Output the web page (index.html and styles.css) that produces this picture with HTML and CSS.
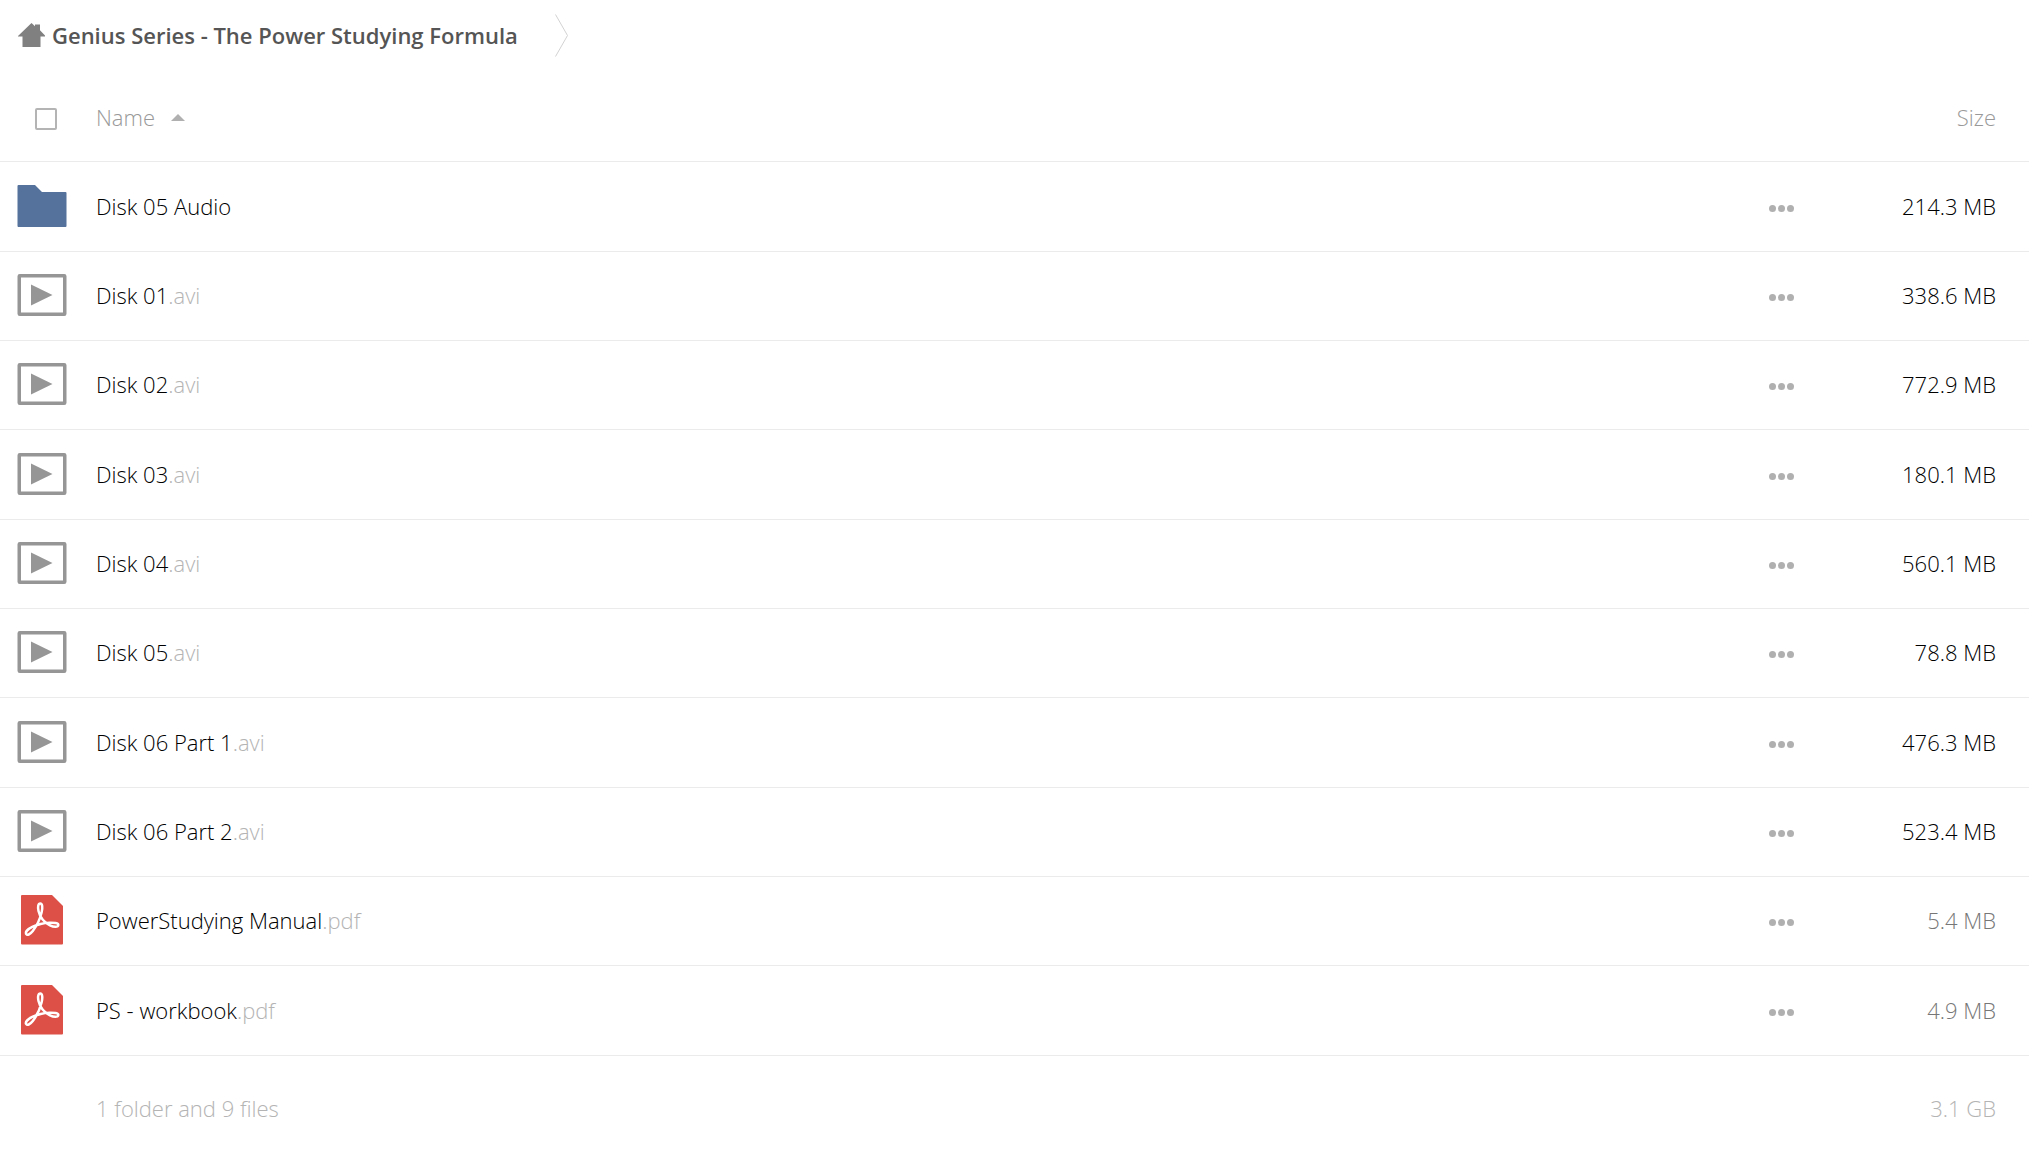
FILE: index.html
```html
<!DOCTYPE html>
<html lang="en">
<head>
    <meta charset="UTF-8">
    <meta name="viewport" content="width=device-width, initial-scale=1.0">
    <title>Genius Series - The Power Studying Formula</title>
    <link rel="stylesheet" href="styles.css">
</head>
<body>
    <!-- Icons shared by the rows -->
    <svg class="sprite" aria-hidden="true">
        <symbol id="icon-folder" viewBox="0 0 50 50">
            <path fill="#54729b" d="M1.500 4H18l7 7h23.500a1 1 0 0 1 1 1V45a1 1 0 0 1-1 1h-47a1 1 0 0 1-1-1V5a1 1 0 0 1 1-1z"/>
        </symbol>
        <symbol id="icon-video" viewBox="0 0 50 50">
            <rect x="2.250" y="5.750" width="45.500" height="38.500" rx="0.500" fill="none" stroke="#969696" stroke-width="3.500"/>
            <path fill="#969696" d="M14 14.500v21l21.500-10.500z"/>
        </symbol>
        <symbol id="icon-pdf" viewBox="0 0 50 50">
            <path fill="#dc5047" d="M5 0h30l11 11v37.500a1 1 0 0 1-1 1H5a1 1 0 0 1-1-1V1a1 1 0 0 1 1-1z"/>
            <path fill="none" stroke="#fff" stroke-width="2.500" stroke-linejoin="round" d="M23.300 8.500c-2.200 0-2.700 3.500-1.800 7.500 1.400 6 6 11.500 11.500 14.300 4 2 8 2 8.300-.2.300-2-4.300-2.600-9-2.400-6 .2-12 1.800-17 4.200-4.200 2-7 5-6.300 7 .8 2 4.300.5 6.800-2.800 4-5.400 7.300-12.300 8.800-18.600 1.200-5 .8-9-1.300-9z"/>
        </symbol>
    </svg>

    <nav class="breadcrumb">
        <a class="crumb" href="#">
            <svg class="home" viewBox="0 0 27 24" aria-hidden="true">
                <path fill="#808080" d="M13.500 0l3.500 3.200V1.500h5v5.800L27.500 13v.5H22.500V24h-18V13.500H0V13z"/>
            </svg>
            <span>Genius Series - The Power Studying Formula</span>
        </a>
        <svg class="chevron" viewBox="0 0 13 43" aria-hidden="true">
            <path fill="none" stroke="#d2d2d2" d="M.5.5l12 21-12 21"/>
        </svg>
    </nav>

    <table class="files">
        <thead>
            <tr>
                <th class="col-icon"><input type="checkbox" class="select-all" aria-label="Select all"></th>
                <th class="col-name"><button class="sort">Name <span class="arrow"></span></button></th>
                <th class="col-menu"></th>
                <th class="col-size"><button class="sort">Size</button></th>
            </tr>
        </thead>
        <tbody>
            <tr>
                <td class="col-icon"><svg class="icon"><use href="#icon-folder"/></svg></td>
                <td class="col-name"><a href="#">Disk 05 Audio</a></td>
                <td class="col-menu"><button class="more" aria-label="Actions"><i></i><i></i><i></i></button></td>
                <td class="col-size">214.3 MB</td>
            </tr>
            <tr>
                <td class="col-icon"><svg class="icon"><use href="#icon-video"/></svg></td>
                <td class="col-name"><a href="#">Disk 01<span class="ext">.avi</span></a></td>
                <td class="col-menu"><button class="more" aria-label="Actions"><i></i><i></i><i></i></button></td>
                <td class="col-size">338.6 MB</td>
            </tr>
            <tr>
                <td class="col-icon"><svg class="icon"><use href="#icon-video"/></svg></td>
                <td class="col-name"><a href="#">Disk 02<span class="ext">.avi</span></a></td>
                <td class="col-menu"><button class="more" aria-label="Actions"><i></i><i></i><i></i></button></td>
                <td class="col-size">772.9 MB</td>
            </tr>
            <tr>
                <td class="col-icon"><svg class="icon"><use href="#icon-video"/></svg></td>
                <td class="col-name"><a href="#">Disk 03<span class="ext">.avi</span></a></td>
                <td class="col-menu"><button class="more" aria-label="Actions"><i></i><i></i><i></i></button></td>
                <td class="col-size">180.1 MB</td>
            </tr>
            <tr>
                <td class="col-icon"><svg class="icon"><use href="#icon-video"/></svg></td>
                <td class="col-name"><a href="#">Disk 04<span class="ext">.avi</span></a></td>
                <td class="col-menu"><button class="more" aria-label="Actions"><i></i><i></i><i></i></button></td>
                <td class="col-size">560.1 MB</td>
            </tr>
            <tr>
                <td class="col-icon"><svg class="icon"><use href="#icon-video"/></svg></td>
                <td class="col-name"><a href="#">Disk 05<span class="ext">.avi</span></a></td>
                <td class="col-menu"><button class="more" aria-label="Actions"><i></i><i></i><i></i></button></td>
                <td class="col-size">78.8 MB</td>
            </tr>
            <tr>
                <td class="col-icon"><svg class="icon"><use href="#icon-video"/></svg></td>
                <td class="col-name"><a href="#">Disk 06 Part 1<span class="ext">.avi</span></a></td>
                <td class="col-menu"><button class="more" aria-label="Actions"><i></i><i></i><i></i></button></td>
                <td class="col-size">476.3 MB</td>
            </tr>
            <tr>
                <td class="col-icon"><svg class="icon"><use href="#icon-video"/></svg></td>
                <td class="col-name"><a href="#">Disk 06 Part 2<span class="ext">.avi</span></a></td>
                <td class="col-menu"><button class="more" aria-label="Actions"><i></i><i></i><i></i></button></td>
                <td class="col-size">523.4 MB</td>
            </tr>
            <tr>
                <td class="col-icon"><svg class="icon"><use href="#icon-pdf"/></svg></td>
                <td class="col-name"><a href="#">PowerStudying Manual<span class="ext">.pdf</span></a></td>
                <td class="col-menu"><button class="more" aria-label="Actions"><i></i><i></i><i></i></button></td>
                <td class="col-size small">5.4 MB</td>
            </tr>
            <tr>
                <td class="col-icon"><svg class="icon"><use href="#icon-pdf"/></svg></td>
                <td class="col-name"><a href="#">PS - workbook<span class="ext">.pdf</span></a></td>
                <td class="col-menu"><button class="more" aria-label="Actions"><i></i><i></i><i></i></button></td>
                <td class="col-size small">4.9 MB</td>
            </tr>
        </tbody>
        <tfoot>
            <tr>
                <td class="col-icon"></td>
                <td class="col-name">1 folder and 9 files</td>
                <td class="col-menu"></td>
                <td class="col-size">3.1 GB</td>
            </tr>
        </tfoot>
    </table>
</body>
</html>
```
FILE: styles.css
```css
* {
    box-sizing: border-box;
}
body {
    margin: 0;
    background-color: #fff;
    color: #000;
    font-family: "Open Sans", sans-serif;
    font-size: 22px;
    font-weight: 300;
    line-height: 32px;
}
a {
    color: inherit;
    text-decoration: none;
}
button {
    padding: 0;
    border: none;
    background: none;
    color: inherit;
    font: inherit;
    cursor: pointer;
}
.sprite {
    display: none;
}

/* Breadcrumb */
.breadcrumb {
    display: flex;
    align-items: center;
    gap: 37px;
    height: 70px;
    padding-left: 18px;
}
.crumb {
    display: flex;
    align-items: center;
    gap: 7px;
    color: #555;
    font-weight: 600;
}
.home {
    width: 27px;
    height: 24px;
}
.chevron {
    width: 13px;
    height: 43px;
}

/* File list */
.files {
    width: 100%;
    border-collapse: separate;
    border-spacing: 0;
    table-layout: fixed;
}
.files th,
.files td {
    height: 89px;
    padding: 0 0 2px;
    border-bottom: 1px solid #ebebeb;
    font-weight: 300;
    text-align: left;
}
.files th {
    height: 92px;
    padding-top: 5px;
    color: #999;
}
.files tbody tr:nth-child(3n+1) td {
    height: 90px;
}
.files .col-icon {
    width: 96px;
    padding-left: 17px;
}
.files .col-menu {
    width: 120px;
}
.files .col-size {
    width: 140px;
    padding-right: 33px;
    text-align: right;
}
.files .small {
    color: #777;
}
.files tfoot td {
    height: 106px;
    border-bottom: none;
    color: #b4b4b4;
}
.ext {
    color: #b4b4b4;
}
.icon {
    display: block;
    width: 50px;
    height: 50px;
}
.select-all {
    appearance: none;
    display: block;
    width: 22px;
    height: 22px;
    margin: 4px 0 0 18px;
    border: 2px solid #b4b4b4;
    border-radius: 2px;
}
.sort {
    display: inline-flex;
    align-items: center;
    gap: 16px;
}
.arrow {
    border: 7px solid transparent;
    border-top: none;
    border-bottom-color: #b0b0b0;
}
.more {
    display: flex;
    gap: 2px;
    padding-top: 5px;
}
.more i {
    width: 7px;
    height: 7px;
    border-radius: 50%;
    background-color: #b0b0b0;
}
```
